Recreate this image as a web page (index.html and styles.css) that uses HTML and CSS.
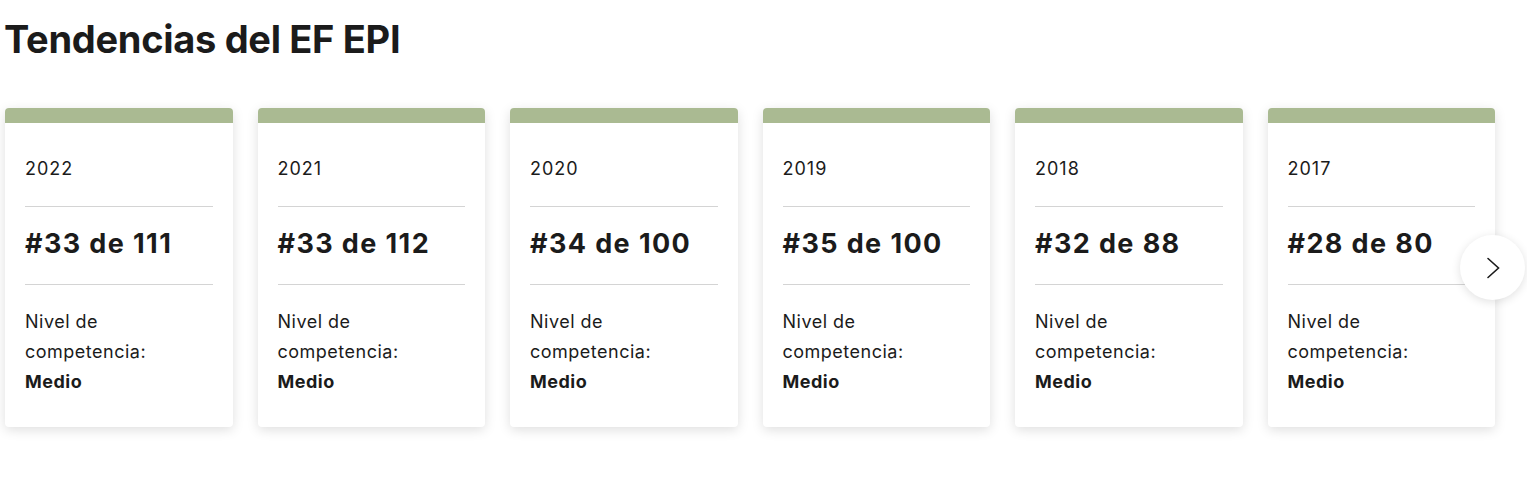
FILE: index.html
```html
<!DOCTYPE html>
<html lang="es">
<head>
<meta charset="utf-8">
<link rel="stylesheet" href="styles.css">
</head>
<body>
<section class="trends">
  <h2 class="title">Tendencias del EF EPI</h2>
  <div class="carousel">
    <div class="track">
      <article class="card">
        <div class="bar"></div>
        <div class="body">
          <div class="year">2022</div>
          <div class="rank">#33 de 111</div>
          <div class="level">Nivel de competencia: <strong>Medio</strong></div>
        </div>
      </article>
      <article class="card">
        <div class="bar"></div>
        <div class="body">
          <div class="year">2021</div>
          <div class="rank">#33 de 112</div>
          <div class="level">Nivel de competencia: <strong>Medio</strong></div>
        </div>
      </article>
      <article class="card">
        <div class="bar"></div>
        <div class="body">
          <div class="year">2020</div>
          <div class="rank">#34 de 100</div>
          <div class="level">Nivel de competencia: <strong>Medio</strong></div>
        </div>
      </article>
      <article class="card">
        <div class="bar"></div>
        <div class="body">
          <div class="year">2019</div>
          <div class="rank">#35 de 100</div>
          <div class="level">Nivel de competencia: <strong>Medio</strong></div>
        </div>
      </article>
      <article class="card">
        <div class="bar"></div>
        <div class="body">
          <div class="year">2018</div>
          <div class="rank">#32 de 88</div>
          <div class="level">Nivel de competencia: <strong>Medio</strong></div>
        </div>
      </article>
      <article class="card">
        <div class="bar"></div>
        <div class="body">
          <div class="year">2017</div>
          <div class="rank">#28 de 80</div>
          <div class="level">Nivel de competencia: <strong>Medio</strong></div>
        </div>
      </article>
    </div>
    <button class="next" aria-label="Siguiente">
      <svg width="16" height="24" viewBox="0 0 16 24" fill="none" stroke="#1b1b1b" stroke-width="1.6" stroke-linecap="round" stroke-linejoin="miter"><path d="M3 2.5l10.5 9.5-10.5 9.5"/></svg>
    </button>
  </div>
</section>
</body>
</html>
```

FILE: styles.css
```css
* { box-sizing: border-box; }
html, body { margin: 0; padding: 0; background: #fff; }
body {
  font-family: Inter, "Noto Sans", "Liberation Sans", sans-serif;
  color: #1b1b1b;
}
.trends { padding: 16px 0 0 4px; }
.title {
  margin: 0;
  font-size: 38px;
  line-height: 46px;
  font-weight: 700;
  letter-spacing: -0.3px;
}
.carousel {
  position: relative;
  margin-top: 46px;
  padding-bottom: 20px;
}
.track {
  display: flex;
  gap: 25px;
  padding-left: 1px;
}
.card {
  width: 227.5px;
  height: 319px;
  background: #fff;
  border-radius: 4px;
  box-shadow: 0 3px 12px rgba(0,0,0,0.13);
  overflow: hidden;
  display: flex;
  flex-direction: column;
}
.bar { height: 15px; background: #aaba92; flex: none; }
.body { padding: 34px 20px 0 20px; }
.year {
  font-size: 18px;
  line-height: 24px;
  letter-spacing: 1px;
  padding-bottom: 25px;
  border-bottom: 1px solid #d4d4d4;
}
.rank {
  font-size: 27px;
  font-weight: 700;
  line-height: 32px;
  letter-spacing: 1.4px;
  padding: 21px 0 24px;
  border-bottom: 1px solid #d4d4d4;
}
.level {
  font-size: 18px;
  line-height: 30px;
  letter-spacing: 0.5px;
  padding-top: 22px;
  width: 150px;
}
.level strong { font-weight: 700; }
.next {
  position: absolute;
  left: 1456px;
  top: 127px;
  width: 65px;
  height: 65px;
  border-radius: 50%;
  border: none;
  background: #fff;
  box-shadow: 0 2px 10px rgba(0,0,0,0.12);
  display: flex;
  align-items: center;
  justify-content: center;
  padding: 0;
  cursor: pointer;
}
```
